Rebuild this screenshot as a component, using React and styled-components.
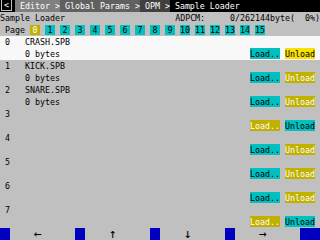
import React from 'react'
import styled, { createGlobalStyle } from 'styled-components'

const GlobalStyle = createGlobalStyle`
  html, body {
    margin: 0;
    padding: 0;
    background: #c0c0c0;
  }
  body {
    font-family: "DejaVu Sans Mono", "Liberation Mono", monospace;
    font-size: 8.3px;
    line-height: 12px;
    color: #000;
  }
`

const CYAN = '#00c0c0'
const OLIVE = '#c0b000'
const YELLOW = '#f8e000'

const samples = [
  { name: 'CRASH.SPB', size: '0 bytes', load: 'cyan', unload: 'yellow' },
  { name: 'KICK.SPB', size: '0 bytes', load: 'cyan', unload: 'olive' },
  { name: 'SNARE.SPB', size: '0 bytes', load: 'cyan', unload: 'olive' },
  { load: 'olive', unload: 'cyan' },
  { load: 'cyan', unload: 'olive' },
  { load: 'cyan', unload: 'olive' },
  { load: 'cyan', unload: 'olive' },
  { load: 'olive', unload: 'cyan' },
]

const crumbs = [
  { text: ' Editor >', bg: '#808080' },
  { text: ' Global Params >', bg: '#606060' },
  { text: ' OPM >', bg: '#404040' },
  { text: ' Sample Loader', bg: '#000000', grow: true },
]

const keys = ['←', '↑', '↓', '→']

const Screen = styled.div`
  width: 320px;
  height: 240px;
  display: flex;
  flex-direction: column;
  overflow: hidden;
  background: #c0c0c0;
`

const TopBar = styled.div`
  display: flex;
  height: 12px;
  white-space: pre;
  color: #fff;
`

const BackCell = styled.div`
  width: 15px;
  background: #000;
  display: flex;
  align-items: flex-start;
`

const BackBox = styled.div`
  width: 11px;
  height: 11px;
  margin-left: 1px;
  border: 1px solid #c0c0c0;
  border-top: none;
  box-sizing: border-box;
  line-height: 11px;
  text-align: center;
`

const Crumb = styled.div`
  background: ${(p) => p.$bg};
  flex: ${(p) => (p.$grow ? 1 : 'none')};
`

const InfoRow = styled.div`
  display: flex;
  justify-content: space-between;
  height: 12px;
  white-space: pre;
`

const PageRow = styled.div`
  display: flex;
  height: 12px;
  padding-left: 5px;
`

const PageLabel = styled.div`
  width: 25px;
`

const PageBox = styled.div`
  width: 10px;
  height: 10px;
  margin-top: 1px;
  margin-right: 5px;
  line-height: 10px;
  text-align: center;
  background: ${(p) => (p.$active ? OLIVE : CYAN)};
  color: ${(p) => (p.$active ? '#fff' : '#000')};
`

const List = styled.div`
  display: flex;
  flex-direction: column;
`

const Entry = styled.div`
  display: grid;
  grid-template-columns: 25px 1fr auto;
  grid-template-rows: 12px 12px;
  background: ${(p) => (p.$selected ? '#f8f8f8' : 'transparent')};
  white-space: pre;
`

const Index = styled.div`
  padding-left: 5px;
`

const Name = styled.div`
  grid-column: 2;
  grid-row: 1;
`

const Size = styled.div`
  grid-column: 2;
  grid-row: 2;
`

const Buttons = styled.div`
  grid-column: 3;
  grid-row: 2;
  display: flex;
  gap: 5px;
  padding-right: 5px;
`

const btnColors = {
  cyan: { bg: CYAN, fg: '#000' },
  olive: { bg: OLIVE, fg: '#fff' },
  yellow: { bg: YELLOW, fg: '#000' },
}

const Btn = styled.div`
  width: 30px;
  height: 11px;
  line-height: 12px;
  overflow: hidden;
  background: ${(p) => btnColors[p.$tone].bg};
  color: ${(p) => btnColors[p.$tone].fg};
`

const BottomBar = styled.div`
  display: flex;
  height: 12px;
  margin-top: auto;
`

const FnKey = styled.div`
  width: 75px;
  display: flex;
`

const Cap = styled.div`
  width: ${(p) => (p.$wide ? '20px' : '10px')};
  background: #0000c0;
`

const KeyLabel = styled.div`
  padding-left: 24px;
  font-size: 13px;
  line-height: 12px;
`

export default function App() {
  return (
    <>
      <GlobalStyle />
      <Screen>
        <TopBar>
          <BackCell>
            <BackBox>&lt;</BackBox>
          </BackCell>
          {crumbs.map((c) => (
            <Crumb key={c.text} $bg={c.bg} $grow={c.grow}>
              {c.text}
            </Crumb>
          ))}
        </TopBar>
        <InfoRow>
          <span>Sample Loader</span>
          <span>ADPCM:     0/262144byte(  0%)</span>
        </InfoRow>
        <PageRow>
          <PageLabel>Page</PageLabel>
          {Array.from({ length: 16 }, (_, i) => (
            <PageBox key={i} $active={i === 0}>
              {i}
            </PageBox>
          ))}
        </PageRow>
        <List>
          {samples.map((s, i) => (
            <Entry key={i} $selected={i === 0}>
              <Index>{i}</Index>
              {s.name && <Name>{s.name}</Name>}
              {s.size && <Size>{s.size}</Size>}
              <Buttons>
                <Btn $tone={s.load}>Load..</Btn>
                <Btn $tone={s.unload}>Unload</Btn>
              </Buttons>
            </Entry>
          ))}
        </List>
        <BottomBar>
          {keys.map((k) => (
            <FnKey key={k}>
              <Cap />
              <KeyLabel>{k}</KeyLabel>
            </FnKey>
          ))}
          <Cap $wide />
        </BottomBar>
      </Screen>
    </>
  )
}
